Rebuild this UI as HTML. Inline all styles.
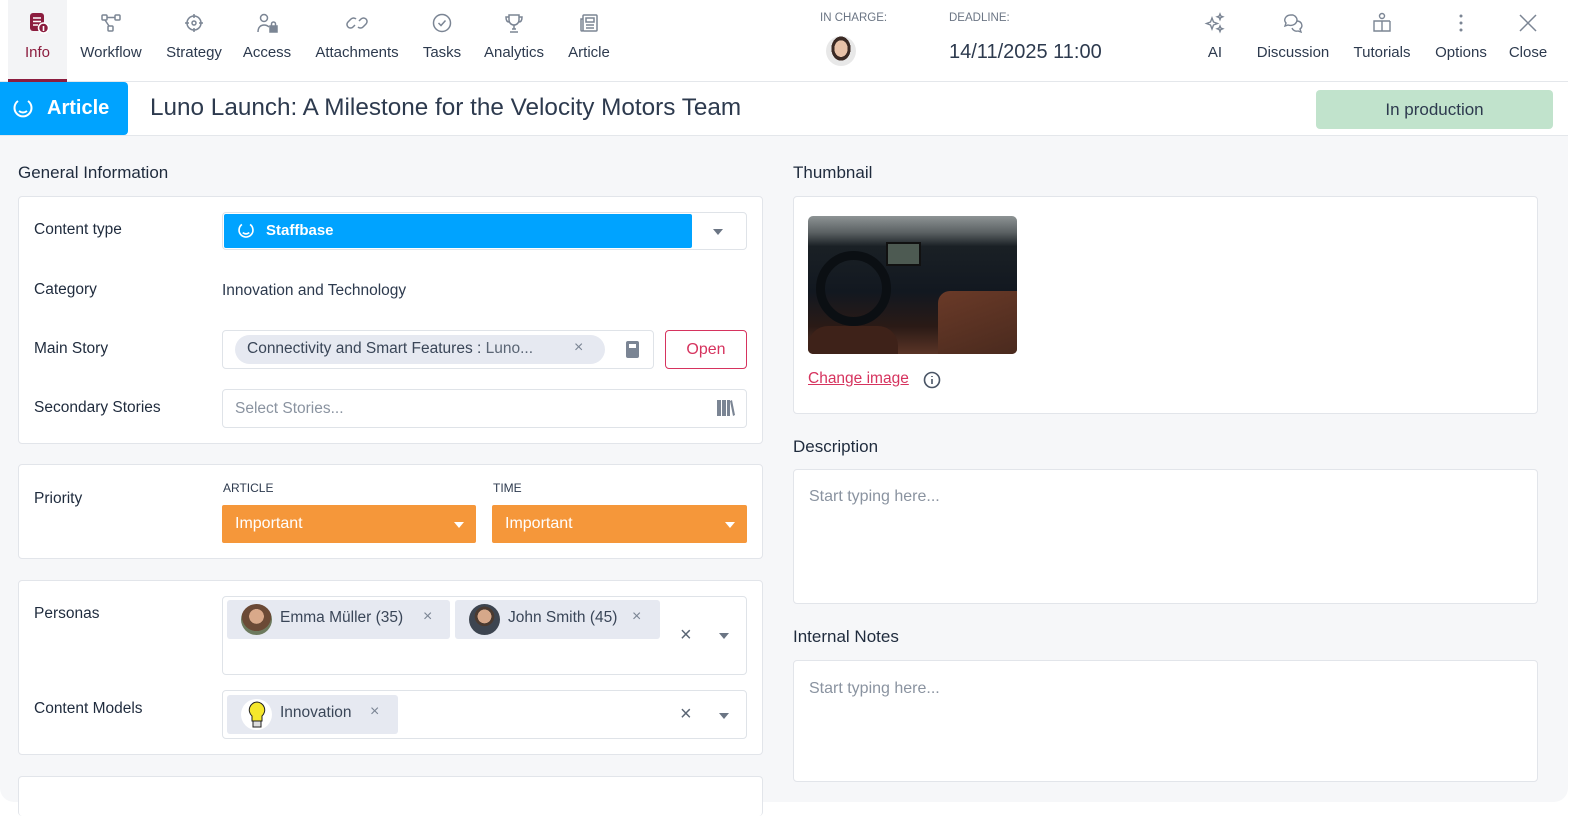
<!DOCTYPE html>
<html><head><meta charset="utf-8"><style>
*{box-sizing:border-box;margin:0;padding:0}
body{width:1588px;height:812px;background:#fff;font-family:"Liberation Sans",sans-serif;color:#2d3a4e;position:relative;overflow:hidden}
.a{position:absolute}
.nav{left:0;top:0;width:1568px;height:82px;border-bottom:1px solid #e4e7eb;background:#fff}
.tab{position:absolute;top:0;height:82px;text-align:center;font-size:15px;color:#2d3a4e}
.tab .lb{position:absolute;top:44px;left:0;right:0;white-space:nowrap}
.tab svg{position:absolute;top:12px;left:50%;margin-left:-11px}
.body{left:0;top:136px;width:1568px;height:666px;background:#f6f7f9;border-radius:0 0 14px 14px}
.card{position:absolute;background:#fff;border:1px solid #e2e5ea;border-radius:4px}
.lbl{position:absolute;font-size:15.5px;color:#1f2b3d}
.h{position:absolute;font-size:17px;color:#1f2b3d}
.fld{position:absolute;border:1px solid #dfe3e8;border-radius:4px;background:#fff}
.chip{position:absolute;background:#e6e9f1;border-radius:3px;font-size:15.5px;color:#3a4658}
.x{color:#7b8594;font-size:16px}
.tri{position:absolute;width:0;height:0;border-left:5px solid transparent;border-right:5px solid transparent;border-top:6px solid #6b7584}
.ph{color:#8a93a0}
</style></head><body>
<div class="a nav">
 <div class="tab" style="left:8px;width:59px;background:#f3f4f6;border-bottom:3px solid #8c1d3f;color:#8c1d3f">
  <svg width="22" height="22" viewBox="0 0 22 22"><rect x="3" y="1" width="14" height="18" rx="3" fill="#8c1d3f"/><path d="M6 6h8M6 9.5h8M6 13h5" stroke="#fff" stroke-width="1.5"/><circle cx="16.5" cy="16" r="5" fill="#8c1d3f" stroke="#fff" stroke-width="1.5"/><path d="M16.5 14v5" stroke="#fff" stroke-width="1.6"/></svg>
  <div class="lb">Info</div></div>
 <div class="tab" style="left:75px;width:72px"><svg width="22" height="22" viewBox="0 0 22 22" fill="none" stroke="#7b8594" stroke-width="1.5"><rect x="2" y="3" width="5" height="5" rx="1"/><rect x="15" y="3" width="5" height="5" rx="1"/><rect x="8" y="14" width="5" height="5" rx="1"/><path d="M7 5.5h8M5 8l4 6"/></svg><div class="lb">Workflow</div></div>
 <div class="tab" style="left:163px;width:62px"><svg width="22" height="22" viewBox="0 0 22 22" fill="none" stroke="#7b8594" stroke-width="1.5"><circle cx="11" cy="11" r="7"/><circle cx="11" cy="11" r="2"/><path d="M11 2v4M11 16v4M2 11h4M16 11h4"/></svg><div class="lb">Strategy</div></div>
 <div class="tab" style="left:240px;width:54px"><svg width="22" height="22" viewBox="0 0 22 22" fill="none" stroke="#7b8594" stroke-width="1.5"><circle cx="8" cy="6" r="3.5"/><path d="M2 20c0-5 3-7 6-7s4 1 5 2"/><rect x="14" y="14" width="7" height="6" fill="#7b8594"/><path d="M15.5 14v-2a2 2 0 014 0v2"/></svg><div class="lb">Access</div></div>
 <div class="tab" style="left:309px;width:96px"><svg width="22" height="22" viewBox="0 0 22 22" fill="none" stroke="#7b8594" stroke-width="1.5"><path d="M9 13l-2 2a3.5 3.5 0 01-5-5l3-3a3.5 3.5 0 015 0M13 9l2-2a3.5 3.5 0 015 5l-3 3a3.5 3.5 0 01-5 0"/></svg><div class="lb">Attachments</div></div>
 <div class="tab" style="left:420px;width:44px"><svg width="22" height="22" viewBox="0 0 22 22" fill="none" stroke="#7b8594" stroke-width="1.5"><circle cx="11" cy="11" r="8.5"/><path d="M7.5 11l2.5 2.5 4.5-5"/></svg><div class="lb">Tasks</div></div>
 <div class="tab" style="left:480px;width:68px"><svg width="22" height="22" viewBox="0 0 22 22" fill="none" stroke="#7b8594" stroke-width="1.5"><path d="M6 3h10v5a5 5 0 01-10 0zM6 5H3c0 3 1 5 3 5M16 5h3c0 3-1 5-3 5M11 13v4M7 20h8M9 17h4"/></svg><div class="lb">Analytics</div></div>
 <div class="tab" style="left:564px;width:50px"><svg width="22" height="22" viewBox="0 0 22 22" fill="none" stroke="#7b8594" stroke-width="1.5"><rect x="5" y="3" width="14" height="16" rx="1"/><path d="M5 7H3v11a1 1 0 002 0"/><rect x="8" y="6" width="8" height="4"/><path d="M8 13h8M8 16h8"/></svg><div class="lb">Article</div></div>
 <div class="a" style="left:820px;top:12px;font-size:11.5px;color:#6b7584">IN CHARGE:</div>
 <div class="a" style="left:826px;top:36px;width:30px;height:30px;border-radius:50%;background:radial-gradient(ellipse 40% 50% at 50% 42%,#e8c2a8 0 55%,#3b2a24 56% 80%,#e8e8e8 81%)"></div>
 <div class="a" style="left:949px;top:12px;font-size:11.5px;color:#6b7584">DEADLINE:</div>
 <div class="a" style="left:949px;top:41px;font-size:20px;color:#2d3a4e">14/11/2025 11:00</div>
 <div class="tab" style="left:1200px;width:30px"><svg width="22" height="22" viewBox="0 0 22 22" fill="none" stroke="#7b8594" stroke-width="1.4"><path d="M8 6l1.5 4 4 1.5-4 1.5L8 17l-1.5-4-4-1.5 4-1.5zM16 2l.8 2 2 .8-2 .8-.8 2-.8-2-2-.8 2-.8zM16 14l.8 2 2 .8-2 .8-.8 2-.8-2-2-.8 2-.8z"/></svg><div class="lb">AI</div></div>
 <div class="tab" style="left:1253px;width:80px"><svg width="22" height="22" viewBox="0 0 22 22" fill="none" stroke="#7b8594" stroke-width="1.4"><path d="M9 3a6 5 0 00-5 8l-1 3 3-1a6 5 0 105-10z"/><path d="M15 9a5 4.5 0 013 8l1 3-3-1a5 4.5 0 01-6-3"/></svg><div class="lb">Discussion</div></div>
 <div class="tab" style="left:1348px;width:68px"><svg width="22" height="22" viewBox="0 0 22 22" fill="none" stroke="#7b8594" stroke-width="1.4"><circle cx="11" cy="4" r="2.5"/><path d="M3 9v10h8V9zM19 9v10h-8M19 9h-8"/></svg><div class="lb">Tutorials</div></div>
 <div class="tab" style="left:1430px;width:62px"><svg width="22" height="22" viewBox="0 0 22 22" fill="#7b8594"><circle cx="11" cy="4" r="1.5"/><circle cx="11" cy="11" r="1.5"/><circle cx="11" cy="18" r="1.5"/></svg><div class="lb">Options</div></div>
 <div class="tab" style="left:1506px;width:44px"><svg width="22" height="22" viewBox="0 0 22 22" fill="none" stroke="#7b8594" stroke-width="1.5"><path d="M3 3l16 16M19 3L3 19"/></svg><div class="lb">Close</div></div>
</div>
<div class="a" style="left:0;top:82px;width:1568px;height:54px;background:#fff;border-bottom:1px solid #e4e7eb"></div>
<div class="a" style="left:0;top:82px;width:128px;height:53px;background:#00a3ff;border-radius:0 4px 4px 0;color:#fff;font-size:20px;font-weight:bold">
 <svg class="a" style="left:12px;top:16px" width="22" height="22" viewBox="0 0 22 22" fill="none" stroke="#fff" stroke-width="2"><path d="M6 3a8.5 8.5 0 1010 0"/><path d="M7 13q4 3 8 0"/></svg>
 <span class="a" style="left:47px;top:15px">Article</span></div>
<div class="a" style="left:150px;top:94px;font-size:24.3px;color:#2d3a4e">Luno Launch: A Milestone for the Velocity Motors Team</div>
<div class="a" style="left:1316px;top:90px;width:237px;height:39px;background:#c1e3cc;border-radius:4px;font-size:17px;text-align:center;line-height:39px;color:#2d3a4e">In production</div>

<div class="a body"></div>
<div class="h" style="left:18px;top:163px">General Information</div>
<div class="card" style="left:18px;top:196px;width:745px;height:248px"></div>
<div class="lbl" style="left:34px;top:221px">Content type</div>
<div class="fld" style="left:222px;top:212px;width:525px;height:38px"></div>
<div class="a" style="left:224px;top:214px;width:468px;height:34px;background:#00a3ff;border-radius:2px;color:#fff;font-weight:bold;font-size:15px">
 <svg class="a" style="left:13px;top:8px" width="18" height="18" viewBox="0 0 22 22" fill="none" stroke="#fff" stroke-width="2"><path d="M6 3a8.5 8.5 0 1010 0"/><path d="M7 13q4 3 8 0"/></svg>
 <span class="a" style="left:42px;top:8px">Staffbase</span></div>
<div class="tri" style="left:713px;top:229px"></div>
<div class="lbl" style="left:34px;top:281px">Category</div>
<div class="lbl" style="left:222px;top:282px;color:#2d3a4e">Innovation and Technology</div>
<div class="lbl" style="left:34px;top:340px">Main Story</div>
<div class="fld" style="left:222px;top:330px;width:432px;height:39px"></div>
<div class="chip" style="left:235px;top:335px;width:370px;height:29px;border-radius:15px"><span class="a" style="left:12px;top:5px;white-space:nowrap">Connectivity and Smart Features : <span style="color:#5a6574">Luno...</span></span><span class="a x" style="left:339px;top:4px">×</span></div>
<svg class="a" style="left:625px;top:340px" width="16" height="20" viewBox="0 0 16 20"><rect x="1" y="1" width="13" height="17" rx="2" fill="#7b8594"/><rect x="4" y="4" width="7" height="4" fill="#fff"/></svg>
<div class="a" style="left:665px;top:330px;width:82px;height:39px;border:1px solid #d6335e;border-radius:4px;color:#d6335e;font-size:16px;text-align:center;line-height:37px">Open</div>
<div class="lbl" style="left:34px;top:399px">Secondary Stories</div>
<div class="fld" style="left:222px;top:389px;width:525px;height:39px"><span class="a ph" style="left:12px;top:10px;font-size:15.5px">Select Stories...</span></div>
<svg class="a" style="left:717px;top:400px" width="18" height="16" viewBox="0 0 18 16" fill="#7b8594"><rect x="0" y="0" width="4" height="16"/><rect x="5" y="0" width="4" height="16"/><rect x="10" y="0" width="3" height="16"/><path d="M13 1l2-1 3 15-2 1z"/></svg>

<div class="card" style="left:18px;top:464px;width:745px;height:95px"></div>
<div class="lbl" style="left:34px;top:490px">Priority</div>
<div class="a" style="left:223px;top:481px;font-size:12px;color:#2d3a4e">ARTICLE</div>
<div class="a" style="left:493px;top:481px;font-size:12px;color:#2d3a4e">TIME</div>
<div class="a" style="left:222px;top:505px;width:254px;height:38px;background:#f5973a;border-radius:2px;color:#fff;font-size:16px"><span class="a" style="left:13px;top:10px">Important</span><div class="tri" style="left:232px;top:17px;border-top-color:#fff"></div></div>
<div class="a" style="left:492px;top:505px;width:255px;height:38px;background:#f5973a;border-radius:2px;color:#fff;font-size:16px"><span class="a" style="left:13px;top:10px">Important</span><div class="tri" style="left:233px;top:17px;border-top-color:#fff"></div></div>

<div class="card" style="left:18px;top:580px;width:745px;height:175px"></div>
<div class="lbl" style="left:34px;top:605px">Personas</div>
<div class="fld" style="left:222px;top:596px;width:525px;height:79px"></div>
<div class="chip" style="left:227px;top:600px;width:223px;height:39px"><div class="a" style="left:14px;top:4px;width:31px;height:31px;border-radius:50%;background:radial-gradient(circle at 50% 40%,#d9a98a 0 30%,#6b4a36 31% 60%,#6d7a5e 61%)"></div><span class="a" style="left:53px;top:9px">Emma Müller (35)</span><span class="a x" style="left:196px;top:8px">×</span></div>
<div class="chip" style="left:455px;top:600px;width:205px;height:39px"><div class="a" style="left:14px;top:4px;width:31px;height:31px;border-radius:50%;background:radial-gradient(circle at 50% 40%,#d6a88a 0 28%,#4a3a30 29% 40%,#3d4550 41%)"></div><span class="a" style="left:53px;top:9px">John Smith (45)</span><span class="a x" style="left:177px;top:8px">×</span></div>
<span class="a" style="left:680px;top:624px;font-size:20px;color:#5a6574">×</span>
<div class="tri" style="left:719px;top:633px"></div>
<div class="lbl" style="left:34px;top:700px">Content Models</div>
<div class="fld" style="left:222px;top:690px;width:525px;height:49px"></div>
<div class="chip" style="left:227px;top:695px;width:171px;height:39px"><div class="a" style="left:14px;top:4px;width:31px;height:31px;border-radius:50%;background:#fff"></div><svg class="a" style="left:20px;top:6px" width="20" height="28" viewBox="0 0 20 28"><path d="M10 1a8 8 0 00-5 14v5h10v-5a8 8 0 00-5-14z" fill="#f5e72b" stroke="#222" stroke-width="1"/><rect x="6" y="20" width="8" height="6" fill="#ddd" stroke="#222" stroke-width="1"/></svg><span class="a" style="left:53px;top:9px">Innovation</span><span class="a x" style="left:143px;top:8px">×</span></div>
<span class="a" style="left:680px;top:703px;font-size:20px;color:#5a6574">×</span>
<div class="tri" style="left:719px;top:713px"></div>
<div class="card" style="left:18px;top:776px;width:745px;height:40px;border-bottom:none"></div>

<div class="h" style="left:793px;top:163px">Thumbnail</div>
<div class="card" style="left:793px;top:196px;width:745px;height:218px"></div>
<div class="a" style="left:808px;top:216px;width:209px;height:138px;border-radius:5px;overflow:hidden;background:linear-gradient(180deg,#8d9394 0,#5b6163 12%,#1a2025 22%,#121820 55%,#2a1a16 80%,#5a3426 100%)">
 <div class="a" style="left:8px;top:35px;width:75px;height:75px;border-radius:50%;border:9px solid #0b0f13"></div>
 <div class="a" style="left:78px;top:26px;width:35px;height:24px;background:#4d5a52;border:2px solid #111"></div>
 <div class="a" style="left:130px;top:75px;width:79px;height:63px;background:linear-gradient(160deg,#6a3a28,#4a2a1e);border-radius:12px 0 0 0"></div>
 <div class="a" style="left:0;top:110px;width:90px;height:28px;background:#3e2219;border-radius:20px 20px 0 0"></div>
</div>
<div class="a" style="left:808px;top:370px;font-size:15.5px;color:#d6335e;text-decoration:underline">Change image</div>
<svg class="a" style="left:923px;top:371px" width="18" height="18" viewBox="0 0 18 18" fill="none" stroke="#4a5566" stroke-width="1.6"><circle cx="9" cy="9" r="7.5"/><path d="M9 8v5M9 5v1"/></svg>
<div class="h" style="left:793px;top:437px">Description</div>
<div class="card" style="left:793px;top:469px;width:745px;height:135px"><span class="a ph" style="left:15px;top:18px;font-size:16px">Start typing here...</span></div>
<div class="h" style="left:793px;top:627px">Internal Notes</div>
<div class="card" style="left:793px;top:660px;width:745px;height:122px"><span class="a ph" style="left:15px;top:19px;font-size:16px">Start typing here...</span></div>
</body></html>
